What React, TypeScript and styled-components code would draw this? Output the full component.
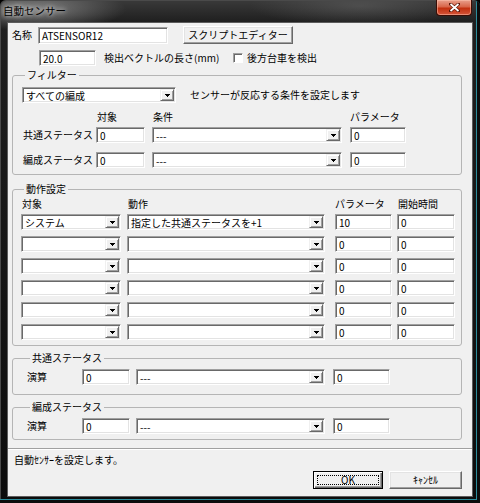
import React from "react";
import styled, { createGlobalStyle } from "styled-components";

const GlobalStyle = createGlobalStyle`
  html, body {
    margin: 0;
    padding: 0;
    background: #000;
  }
  body {
    font-family: "Noto Sans CJK JP", "Noto Sans", sans-serif;
    font-size: 10px;
    color: #000;
  }
`;

const Window = styled.div`
  width: 480px;
  height: 503px;
  box-sizing: border-box;
  display: flex;
  flex-direction: column;
  padding: 0 7px 6px;
  border-radius: 6px 6px 0 0;
  background:
    radial-gradient(ellipse 90px 22px at 36px 9px, rgba(150, 150, 150, 0.75), transparent),
    radial-gradient(ellipse 110px 20px at 360px 6px, rgba(110, 110, 110, 0.45), transparent),
    linear-gradient(to bottom, #3a3a3a 0px, #1f1f1f 22px, #141414 60%, #0c0c0c 100%);
  box-shadow: inset -3px -3px 0 #0c0c0c, inset -4px -4px 0 #2c8d9c, inset 1px 1px 0 #4a4a4a;
`;

const TitleBar = styled.div`
  height: 22px;
  flex: none;
  display: flex;
  align-items: flex-start;
  justify-content: space-between;
`;

const Title = styled.span`
  margin: 3px 0 0 -4px;
  font-size: 10.5px;
  line-height: 15px;
  color: #000;
  text-shadow: 0 0 4px rgba(255, 255, 255, 0.9), 0 0 8px rgba(255, 255, 255, 0.6);
`;

const CloseButton = styled.div`
  width: 36px;
  height: 16px;
  margin-right: 1px;
  box-sizing: border-box;
  border: 1px solid #3a0d05;
  border-top: none;
  border-radius: 0 0 4px 4px;
  background: linear-gradient(to bottom, #e9a08c 0%, #d8664a 45%, #c2300f 55%, #d4553a 100%);
  box-shadow: inset 0 0 0 1px rgba(255, 200, 180, 0.5);
  display: flex;
  align-items: center;
  justify-content: center;
`;

const Client = styled.div`
  flex: 1;
  background: #f0f0f0;
  border: 1px solid #5c5c5c;
  display: flex;
  flex-direction: column;
`;

const Row = styled.div<{ $mt: number; $ml?: number; $h?: number }>`
  display: flex;
  align-items: center;
  margin-top: ${(p) => p.$mt}px;
  margin-left: ${(p) => p.$ml ?? 0}px;
  height: ${(p) => p.$h ?? 18}px;
  white-space: nowrap;
`;

const Label = styled.span<{ $w?: number; $pl?: number }>`
  display: inline-block;
  width: ${(p) => (p.$w ? `${p.$w}px` : "auto")};
  padding-left: ${(p) => p.$pl ?? 0}px;
  line-height: 14px;
  white-space: nowrap;
  box-sizing: border-box;
`;

const Field = styled.div<{ $w: number; $h?: number; $ml?: number }>`
  width: ${(p) => p.$w}px;
  height: ${(p) => p.$h ?? 16}px;
  margin-left: ${(p) => p.$ml ?? 0}px;
  box-sizing: border-box;
  background: #fff;
  border: 1px solid;
  border-color: #a0a0a0 #ffffff #ffffff #a0a0a0;
  box-shadow: inset 1px 1px 0 #696969, inset -1px -1px 0 #e3e3e3;
  padding-left: 3px;
  display: flex;
  align-items: center;
  white-space: nowrap;
`;

const Combo = styled.div<{ $w: number }>`
  width: ${(p) => p.$w}px;
  height: 16px;
  box-sizing: border-box;
  background: #fff;
  border: 1px solid;
  border-color: #a0a0a0 #ffffff #ffffff #a0a0a0;
  box-shadow: inset 1px 1px 0 #696969, inset -1px -1px 0 #e3e3e3;
  padding: 1px;
  display: flex;
`;

const ComboText = styled.span`
  flex: 1;
  padding-left: 2px;
  display: flex;
  align-items: center;
  white-space: nowrap;
`;

const ComboArrow = styled.span`
  width: 14px;
  height: 12px;
  box-sizing: border-box;
  background: #f0f0f0;
  border: 1px solid;
  border-color: #f0f0f0 #696969 #696969 #f0f0f0;
  box-shadow: inset 1px 1px 0 #ffffff, inset -1px -1px 0 #a0a0a0;
  display: flex;
  align-items: center;
  justify-content: center;
`;

const CheckBox = styled.span`
  width: 10px;
  height: 10px;
  margin-right: 4px;
  box-sizing: border-box;
  background: #fff;
  border: 1px solid;
  border-color: #a0a0a0 #ffffff #ffffff #a0a0a0;
  box-shadow: inset 1px 1px 0 #696969;
`;

const PushButton = styled.button<{ $w: number; $ml?: number; $default?: boolean }>`
  width: ${(p) => p.$w}px;
  height: 18px;
  margin-left: ${(p) => p.$ml ?? 0}px;
  padding: 0;
  box-sizing: border-box;
  font: inherit;
  font-size: 10px;
  color: #000;
  background: #f0f0f0;
  border: 1px solid;
  border-color: ${(p) => (p.$default ? "#000 #000 #000 #000" : "#ffffff #696969 #696969 #ffffff")};
  box-shadow: ${(p) =>
    p.$default
      ? "inset 1px 1px 0 #ffffff, inset -1px -1px 0 #696969, inset -2px -2px 0 #a0a0a0"
      : "inset -1px -1px 0 #a0a0a0, inset 1px 1px 0 #e3e3e3"};
  display: flex;
  align-items: center;
  justify-content: center;
  line-height: 14px;
`;

const FocusRect = styled.span`
  width: calc(100% - 6px);
  height: calc(100% - 6px);
  box-sizing: border-box;
  border: 1px dotted #000;
  display: flex;
  align-items: center;
  justify-content: center;
`;

const Group = styled.fieldset<{ $mt: number; $pad: string }>`
  margin: ${(p) => p.$mt}px 10px 0 4px;
  padding: ${(p) => p.$pad};
  min-width: 0;
  border: 1px solid #b5b5b5;
  border-radius: 3px;
`;

const Legend = styled.legend`
  margin-left: 3px;
  padding: 0 2px;
  font-size: 10px;
  line-height: 12px;
  height: 12px;
`;

const Line = styled.div<{ $cols: string; $mt?: number; $h?: number }>`
  display: grid;
  grid-template-columns: ${(p) => p.$cols};
  align-items: center;
  margin-top: ${(p) => p.$mt ?? 0}px;
  height: ${(p) => p.$h ?? 16}px;
`;

const Separator = styled.div`
  margin-top: 8px;
  height: 1px;
  background: #a0a0a0;
  border-bottom: 1px solid #ffffff;
`;

const Status = styled.div`
  margin: 3px 0 0 6px;
  line-height: 14px;
`;

const Footer = styled.div`
  display: flex;
  justify-content: flex-end;
  margin: 4px 10px 0 0;
`;

const Arrow = () => (
  <svg width="5" height="3" viewBox="0 0 5 3" shapeRendering="crispEdges">
    <rect x="0" y="0" width="5" height="1" fill="#000" />
    <rect x="1" y="1" width="3" height="1" fill="#000" />
    <rect x="2" y="2" width="1" height="1" fill="#000" />
  </svg>
);

const Select: React.FC<{ w: number; value?: string }> = ({ w, value = "" }) => (
  <Combo $w={w}>
    <ComboText>{value}</ComboText>
    <ComboArrow>
      <Arrow />
    </ComboArrow>
  </Combo>
);

const actions = [
  { target: "システム", action: "指定した共通ステータスを+1", param: "10", start: "0" },
  { target: "", action: "", param: "0", start: "0" },
  { target: "", action: "", param: "0", start: "0" },
  { target: "", action: "", param: "0", start: "0" },
  { target: "", action: "", param: "0", start: "0" },
  { target: "", action: "", param: "0", start: "0" },
];

const actionCols = "106px 208px 62px 58px";
const filterCols = "74px 56px 198px 56px";
const calcCols = "55px 54px 197px 57px";

export default function App() {
  return (
    <>
      <GlobalStyle />
      <Window>
        <TitleBar>
          <Title>自動センサー</Title>
          <CloseButton>
            <svg width="11" height="9" viewBox="0 0 11 9">
              <path
                d="M1.5 1 L9.5 8 M9.5 1 L1.5 8"
                stroke="#5a1608"
                strokeWidth="3.2"
                strokeLinecap="round"
              />
              <path d="M1.5 1 L9.5 8 M9.5 1 L1.5 8" stroke="#ffffff" strokeWidth="1.8" />
            </svg>
          </CloseButton>
        </TitleBar>
        <Client>
          <Row $mt={3} $ml={4}>
            <Label $w={26}>名称</Label>
            <Field $w={130} $h={17}>ATSENSOR12</Field>
            <PushButton $w={110} $ml={15}>
              スクリプトエディター
            </PushButton>
          </Row>
          <Row $mt={6} $ml={31} $h={16}>
            <Field $w={57}>20.0</Field>
            <Label $w={137} $pl={8}>
              検出ベクトルの長さ(mm)
            </Label>
            <CheckBox />
            <Label>後方台車を検出</Label>
          </Row>

          <Group $mt={3} $pad="6px 0 6px 9px">
            <Legend>フィルター</Legend>
            <Line $cols="154px auto">
              <Select w={154} value="すべての編成" />
              <Label $pl={14}>センサーが反応する条件を設定します</Label>
            </Line>
            <Line $cols={filterCols} $mt={7} $h={14}>
              <span />
              <Label $pl={1}>対象</Label>
              <Label $pl={1}>条件</Label>
              <Label>パラメータ</Label>
            </Line>
            <Line $cols={filterCols} $mt={3}>
              <Label $pl={1}>共通ステータス</Label>
              <Field $w={49}>0</Field>
              <Select w={190} value="---" />
              <Field $w={56}>0</Field>
            </Line>
            <Line $cols={filterCols} $mt={9}>
              <Label $pl={1}>編成ステータス</Label>
              <Field $w={49}>0</Field>
              <Select w={190} value="---" />
              <Field $w={56}>0</Field>
            </Line>
          </Group>

          <Group $mt={8} $pad="2px 0 5px 8px">
            <Legend>動作設定</Legend>
            <Line $cols={actionCols} $h={14}>
              <Label $pl={1}>対象</Label>
              <Label $pl={1}>動作</Label>
              <Label>パラメータ</Label>
              <Label $pl={1}>開始時間</Label>
            </Line>
            {actions.map((a, i) => (
              <Line key={i} $cols={actionCols} $mt={i === 0 ? 3 : 6}>
                <Select w={100} value={a.target} />
                <Select w={198} value={a.action} />
                <Field $w={57}>{a.param}</Field>
                <Field $w={58}>{a.start}</Field>
              </Line>
            ))}
          </Group>

          <Group $mt={6} $pad="5px 0 9px 14px">
            <Legend>共通ステータス</Legend>
            <Line $cols={calcCols}>
              <Label>演算</Label>
              <Field $w={48}>0</Field>
              <Select w={189} value="---" />
              <Field $w={57}>0</Field>
            </Line>
          </Group>

          <Group $mt={6} $pad="5px 0 5px 14px">
            <Legend>編成ステータス</Legend>
            <Line $cols={calcCols}>
              <Label>演算</Label>
              <Field $w={48}>0</Field>
              <Select w={189} value="---" />
              <Field $w={57}>0</Field>
            </Line>
          </Group>

          <Separator />
          <Status>自動ｾﾝｻｰを設定します。</Status>
          <Footer>
            <PushButton $w={70} $default>
              <FocusRect>OK</FocusRect>
            </PushButton>
            <PushButton $w={73} $ml={6}>
              ｷｬﾝｾﾙ
            </PushButton>
          </Footer>
        </Client>
      </Window>
    </>
  );
}
